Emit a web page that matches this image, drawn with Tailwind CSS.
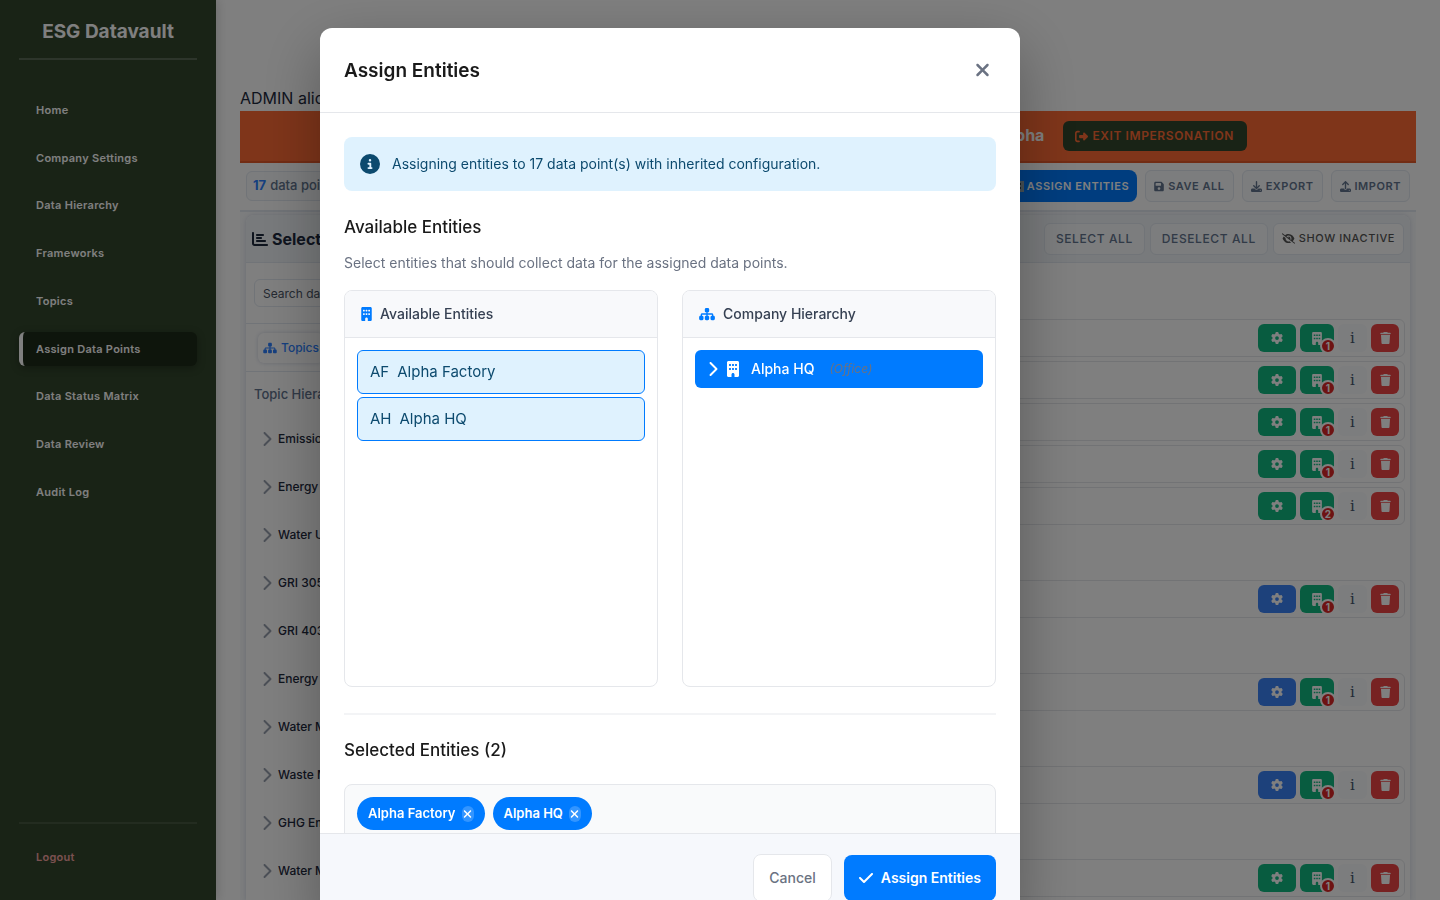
<!DOCTYPE html>
<html lang="en">
<head>
<meta charset="utf-8">
<meta name="viewport" content="width=device-width, initial-scale=1">
<title>ESG Datavault - Assign Data Points</title>
<script src="https://cdn.jsdelivr.net/npm/@tailwindcss/browser@4"></script>
</head>
<body class="h-screen overflow-hidden bg-white font-['Inter',sans-serif] text-slate-800">

<svg class="hidden" aria-hidden="true">
  <symbol id="xmark" viewBox="0 0 384 512"><path d="M342.6 150.6c12.5-12.5 12.5-32.8 0-45.3s-32.8-12.5-45.3 0L192 210.7 86.6 105.4c-12.5-12.5-32.8-12.5-45.3 0s-12.5 32.8 0 45.3L146.7 256 41.4 361.4c-12.5 12.5-12.5 32.8 0 45.3s32.8 12.5 45.3 0L192 301.3 297.4 406.6c12.5 12.5 32.8 12.5 45.3 0s12.5-32.8 0-45.3L237.3 256 342.6 150.6z"/></symbol>
  <symbol id="building" viewBox="0 0 384 512"><path d="M48 0C21.5 0 0 21.5 0 48V464c0 26.5 21.5 48 48 48h96V432c0-26.5 21.5-48 48-48s48 21.5 48 48v80h96c26.5 0 48-21.5 48-48V48c0-26.5-21.5-48-48-48H48zM64 240c0-8.8 7.2-16 16-16h32c8.8 0 16 7.2 16 16v32c0 8.8-7.2 16-16 16H80c-8.8 0-16-7.2-16-16V240zm112-16h32c8.8 0 16 7.2 16 16v32c0 8.8-7.2 16-16 16H176c-8.8 0-16-7.2-16-16V240c0-8.8 7.2-16 16-16zm80 16c0-8.8 7.2-16 16-16h32c8.8 0 16 7.2 16 16v32c0 8.8-7.2 16-16 16H272c-8.8 0-16-7.2-16-16V240zM80 96h32c8.8 0 16 7.2 16 16v32c0 8.8-7.2 16-16 16H80c-8.8 0-16-7.2-16-16V112c0-8.8 7.2-16 16-16zm80 16c0-8.8 7.2-16 16-16h32c8.8 0 16 7.2 16 16v32c0 8.8-7.2 16-16 16H176c-8.8 0-16-7.2-16-16V112zM272 96h32c8.8 0 16 7.2 16 16v32c0 8.8-7.2 16-16 16H272c-8.8 0-16-7.2-16-16V112c0-8.8 7.2-16 16-16z"/></symbol>
  <symbol id="chevron" viewBox="0 0 320 512"><path d="M310.6 233.4c12.5 12.5 12.5 32.8 0 45.3l-192 192c-12.5 12.5-32.8 12.5-45.3 0s-12.5-32.8 0-45.3L242.7 256 73.4 86.6c-12.5-12.5-12.5-32.8 0-45.3s32.8-12.5 45.3 0l192 192z"/></symbol>
  <symbol id="sitemap" viewBox="0 0 576 512"><path d="M208 80c0-26.5 21.5-48 48-48h64c26.5 0 48 21.5 48 48v64c0 26.5-21.5 48-48 48h-8v40H464c30.9 0 56 25.1 56 56v32h8c26.5 0 48 21.5 48 48v64c0 26.5-21.5 48-48 48H464c-26.5 0-48-21.5-48-48V368c0-26.5 21.5-48 48-48h8V288c0-4.4-3.6-8-8-8H312v40h8c26.5 0 48 21.5 48 48v64c0 26.5-21.5 48-48 48H256c-26.5 0-48-21.5-48-48V368c0-26.5 21.5-48 48-48h8V280H112c-4.4 0-8 3.6-8 8v32h8c26.5 0 48 21.5 48 48v64c0 26.5-21.5 48-48 48H48c-26.5 0-48-21.5-48-48V368c0-26.5 21.5-48 48-48h8V288c0-30.9 25.1-56 56-56H264V192h-8c-26.5 0-48-21.5-48-48V80z"/></symbol>
  <symbol id="info" viewBox="0 0 512 512"><path d="M256 512A256 256 0 1 0 256 0a256 256 0 1 0 0 512zM216 336h24V272H216c-13.3 0-24-10.7-24-24s10.7-24 24-24h48c13.3 0 24 10.7 24 24v88h8c13.3 0 24 10.7 24 24s-10.7 24-24 24H216c-13.3 0-24-10.7-24-24s10.7-24 24-24zm40-208a32 32 0 1 1 0 64 32 32 0 1 1 0-64z"/></symbol>
  <symbol id="check" viewBox="0 0 448 512"><path d="M438.6 105.4c12.5 12.5 12.5 32.8 0 45.3l-256 256c-12.5 12.5-32.8 12.5-45.3 0l-128-128c-12.5-12.5-12.5-32.8 0-45.3s32.8-12.5 45.3 0L160 338.7 393.4 105.4c12.5-12.5 32.8-12.5 45.3 0z"/></symbol>
  <symbol id="gear" viewBox="0 0 512 512"><path d="M495.9 166.6c3.2 8.7 .5 18.4-6.4 24.6l-43.3 39.4c1.1 8.3 1.7 16.8 1.7 25.4s-.6 17.1-1.7 25.4l43.3 39.4c6.9 6.2 9.6 15.9 6.4 24.6c-4.4 11.9-9.7 23.3-15.8 34.3l-4.7 8.1c-6.6 11-14 21.4-22.1 31.2c-5.9 7.2-15.7 9.6-24.5 6.8l-55.7-17.7c-13.4 10.3-28.2 18.9-44 25.4l-12.5 57.1c-2 9.1-9 16.3-18.2 17.8c-13.8 2.3-28 3.5-42.5 3.5s-28.7-1.2-42.5-3.5c-9.2-1.5-16.2-8.7-18.2-17.8l-12.5-57.1c-15.8-6.5-30.6-15.1-44-25.4L83.1 425.9c-8.8 2.8-18.6 .3-24.5-6.8c-8.1-9.8-15.5-20.2-22.1-31.2l-4.7-8.1c-6.1-11-11.4-22.4-15.8-34.3c-3.2-8.7-.5-18.4 6.4-24.6l43.3-39.4C64.6 273.1 64 264.6 64 256s.6-17.1 1.7-25.4L22.4 191.2c-6.9-6.2-9.6-15.9-6.4-24.6c4.4-11.9 9.7-23.3 15.8-34.3l4.7-8.1c6.6-11 14-21.4 22.1-31.2c5.9-7.2 15.7-9.6 24.5-6.8l55.7 17.7c13.4-10.3 28.2-18.9 44-25.4l12.5-57.1c2-9.1 9-16.3 18.2-17.8C227.3 1.2 241.5 0 256 0s28.7 1.2 42.5 3.5c9.2 1.5 16.2 8.7 18.2 17.8l12.5 57.1c15.8 6.5 30.6 15.1 44 25.4l55.7-17.7c8.8-2.8 18.6-.3 24.5 6.8c8.1 9.8 15.5 20.2 22.1 31.2l4.7 8.1c6.1 11 11.4 22.4 15.8 34.3zM256 336a80 80 0 1 0 0-160 80 80 0 1 0 0 160z"/></symbol>
  <symbol id="trash" viewBox="0 0 448 512"><path d="M135.2 17.7L128 32H32C14.3 32 0 46.3 0 64S14.3 96 32 96H416c17.7 0 32-14.3 32-32s-14.3-32-32-32H320l-7.2-14.3C307.4 6.8 296.3 0 284.2 0H163.8c-12.1 0-23.2 6.8-28.6 17.7zM416 128H32L53.2 467c1.6 25.3 22.6 45 47.9 45H346.9c25.3 0 46.3-19.7 47.9-45L416 128z"/></symbol>
  <symbol id="exit" viewBox="0 0 512 512"><path d="M377.9 105.9L500.7 228.7c7.2 7.2 11.3 17.1 11.3 27.3s-4.1 20.1-11.3 27.3L377.9 406.1c-6.4 6.4-15 9.9-24 9.9c-18.7 0-33.9-15.2-33.9-33.9l0-62.1-128 0c-17.7 0-32-14.3-32-32l0-64c0-17.7 14.3-32 32-32l128 0 0-62.1c0-18.7 15.2-33.9 33.9-33.9c9 0 17.6 3.6 24 9.9zM160 96L96 96c-17.7 0-32 14.3-32 32l0 256c0 17.7 14.3 32 32 32l64 0c17.7 0 32 14.3 32 32s-14.3 32-32 32l-64 0c-53 0-96-43-96-96L0 128C0 75 43 32 96 32l64 0c17.7 0 32 14.3 32 32s-14.3 32-32 32z"/></symbol>
  <symbol id="save" viewBox="0 0 448 512"><path d="M64 32C28.7 32 0 60.7 0 96V416c0 35.3 28.7 64 64 64H384c35.3 0 64-28.7 64-64V173.3c0-17-6.7-33.3-18.7-45.3L352 50.7C340 38.7 323.7 32 306.7 32H64zm0 96c0-17.7 14.3-32 32-32H288c17.7 0 32 14.3 32 32v64c0 17.7-14.3 32-32 32H96c-17.7 0-32-14.3-32-32V128zM224 288a64 64 0 1 1 0 128 64 64 0 1 1 0-128z"/></symbol>
  <symbol id="download" viewBox="0 0 512 512"><path d="M288 32c0-17.7-14.3-32-32-32s-32 14.3-32 32V274.7l-73.4-73.4c-12.5-12.5-32.8-12.5-45.3 0s-12.5 32.8 0 45.3l128 128c12.5 12.5 32.8 12.5 45.3 0l128-128c12.5-12.5 12.5-32.8 0-45.3s-32.8-12.5-45.3 0L288 274.7V32zM64 352c-35.3 0-64 28.7-64 64v32c0 35.3 28.7 64 64 64H448c35.3 0 64-28.7 64-64V416c0-35.3-28.7-64-64-64H346.5l-45.3 45.3c-25 25-65.5 25-90.5 0L165.5 352H64zm368 56a24 24 0 1 1 0 48 24 24 0 1 1 0-48z"/></symbol>
  <symbol id="upload" viewBox="0 0 512 512"><path d="M288 109.3V352c0 17.7-14.3 32-32 32s-32-14.3-32-32V109.3l-73.4 73.4c-12.5 12.5-32.8 12.5-45.3 0s-12.5-32.8 0-45.3l128-128c12.5-12.5 32.8-12.5 45.3 0l128 128c12.5 12.5 12.5 32.8 0 45.3s-32.8 12.5-45.3 0L288 109.3zM64 352H192c0 35.3 28.7 64 64 64s64-28.7 64-64H448c35.3 0 64 28.7 64 64v32c0 35.3-28.7 64-64 64H64c-35.3 0-64-28.7-64-64V416c0-35.3 28.7-64 64-64zM432 456a24 24 0 1 0 0-48 24 24 0 1 0 0 48z"/></symbol>
  <symbol id="eye-slash" viewBox="0 0 640 512"><path d="M38.8 5.1C28.4-3.1 13.3-1.2 5.1 9.2S-1.2 34.7 9.2 42.9l592 464c10.4 8.2 25.5 6.3 33.7-4.1s6.3-25.5-4.1-33.7L525.6 386.7c39.6-40.6 66.4-86.1 79.9-118.4c3.3-7.9 3.3-16.7 0-24.6c-14.9-35.7-46.2-87.7-93-131.1C465.5 68.8 400.8 32 320 32c-68.2 0-125 26.3-169.3 60.8L38.8 5.1zM223.1 149.5C248.6 126.2 282.7 112 320 112c79.5 0 144 64.5 144 144c0 24.9-6.3 48.3-17.4 68.7L408 294.5c8.4-19.3 10.6-41.4 4.8-63.3c-11.1-41.5-47.8-69.4-88.6-71.1c-5.8-.2-9.2 6.1-7.4 11.7c2.1 6.4 3.3 13.2 3.3 20.3c0 10.2-2.4 19.8-6.6 28.3l-90.3-70.8zM373 389.9c-16.4 6.5-34.3 10.1-53 10.1c-79.5 0-144-64.5-144-144c0-6.9 .5-13.6 1.4-20.2L83.1 161.5C60.3 191.2 44 220.8 34.5 243.7c-3.3 7.9-3.3 16.7 0 24.6c14.9 35.7 46.2 87.7 93 131.1C174.5 443.2 239.2 480 320 480c47.8 0 89.9-12.9 126.2-32.5L373 389.9z"/></symbol>
  <symbol id="chart" viewBox="0 0 512 512"><path d="M32 32c17.7 0 32 14.3 32 32V400c0 8.8 7.2 16 16 16H480c17.7 0 32 14.3 32 32s-14.3 32-32 32H80c-44.2 0-80-35.8-80-80V64C0 46.3 14.3 32 32 32zm96 96c0-17.7 14.3-32 32-32l192 0c17.7 0 32 14.3 32 32s-14.3 32-32 32H160c-17.7 0-32-14.3-32-32zm32 64H288c17.7 0 32 14.3 32 32s-14.3 32-32 32H160c-17.7 0-32-14.3-32-32s14.3-32 32-32zm0 96H416c17.7 0 32 14.3 32 32s-14.3 32-32 32H160c-17.7 0-32-14.3-32-32s14.3-32 32-32z"/></symbol>
</svg>

<div class="flex h-full">
  <!-- Sidebar -->
  <aside class="z-10 flex w-[216px] shrink-0 flex-col bg-[#32462c] px-[19px] shadow-[2px_0_10px_rgba(0,0,0,0.15)]">
    <div class="flex h-[60px] items-center justify-center border-b-2 border-white/20 pt-1.5 text-[19px] leading-6 font-bold text-white">ESG Datavault</div>
    <nav class="mt-[33px] flex h-[416px] flex-col justify-between text-[11px] font-semibold tracking-wide text-white">
      <a href="#" class="flex h-[34px] items-center px-[17px]">Home</a>
      <a href="#" class="flex h-[34px] items-center px-[17px]">Company Settings</a>
      <a href="#" class="flex h-[34px] items-center px-[17px]">Data Hierarchy</a>
      <a href="#" class="flex h-[34px] items-center px-[17px]">Frameworks</a>
      <a href="#" class="flex h-[34px] items-center px-[17px]">Topics</a>
      <a href="#" class="flex h-[34px] items-center rounded-md border-l-4 border-white bg-[#1d2a18] pl-[13px] shadow-[0_2px_8px_rgba(0,0,0,0.3)]">Assign Data Points</a>
      <a href="#" class="flex h-[34px] items-center px-[17px]">Data Status Matrix</a>
      <a href="#" class="flex h-[34px] items-center px-[17px]">Data Review</a>
      <a href="#" class="flex h-[34px] items-center px-[17px]">Audit Log</a>
    </nav>
    <div class="mt-auto h-[78px] border-t-2 border-white/10 pt-4 text-[11px] font-semibold tracking-wide">
      <a href="#" class="flex h-[34px] items-center px-[17px] text-[#f5a3a3]">Logout</a>
    </div>
  </aside>

  <!-- Page -->
  <main class="flex min-w-0 flex-1 flex-col px-6 pt-[86px]">
    <p class="h-[25px] text-base">ADMIN alice</p>

    <div class="flex h-[52px] shrink-0 items-center justify-end gap-[19px] border-b-2 border-[#e55a2b] bg-[#ff6b35] pr-[169px] text-white">
      <strong class="pb-[3px] text-base leading-6 font-bold">Alpha</strong>
      <button class="flex h-[30px] items-center gap-1 rounded-md bg-[#32462c] px-3 pr-[13px] text-xs font-semibold tracking-wider text-[#ff6b35]"><svg class="size-[13px] fill-current"><use href="#exit"/></svg>EXIT IMPERSONATION</button>
    </div>

    <div class="flex h-[49px] shrink-0 items-center justify-between border-b-2 border-slate-200 px-1.5 pb-px text-[11px] font-medium text-slate-500">
      <div class="flex h-[30px] items-center gap-1 rounded-md border border-slate-200 bg-slate-50 px-1.5 text-[13px]"><b class="font-bold text-blue-500">17</b>data points</div>
      <div class="flex gap-2">
        <button class="flex h-8 items-center gap-[3px] rounded-lg bg-[#007bff] px-2 font-semibold tracking-wider text-white"><svg class="size-3" viewBox="0 0 12 12"><path fill="#90a4ae" d="M1 1h11v11H1z"/><path fill="#37474f" d="M3 3h2v2H3zM7 3h2v2H7zM3 7h2v2H3zM7 7h2v2H7z"/></svg>ASSIGN ENTITIES</button>
        <button class="flex h-8 items-center gap-1 rounded-md border border-slate-200 bg-slate-50 px-2 font-semibold tracking-wider"><svg class="h-[11px] w-[10px] fill-current"><use href="#save"/></svg>SAVE ALL</button>
        <button class="flex h-8 items-center gap-1 rounded-md border border-slate-200 bg-slate-50 px-2 font-semibold tracking-wider"><svg class="size-[11px] fill-current"><use href="#download"/></svg>EXPORT</button>
        <button class="flex h-8 items-center gap-1 rounded-md border border-slate-200 bg-slate-50 px-2 font-semibold tracking-wider"><svg class="size-[11px] fill-current"><use href="#upload"/></svg>IMPORT</button>
      </div>
    </div>

    <div class="flex min-h-0 flex-1 gap-2 bg-slate-50 px-1.5 pt-[3px]">
      <!-- Topic tree -->
      <section class="w-[400px] shrink-0 rounded-t-lg bg-white shadow-[0_0_4px_rgba(100,116,160,0.25)]">
        <h2 class="flex h-12 items-center gap-1 rounded-t-lg border-b border-slate-200 bg-slate-100 px-1.5 text-base font-bold"><svg class="size-4 fill-current"><use href="#chart"/></svg>Select</h2>
        <div class="h-[61px] border-b border-slate-200 px-2 pt-4">
          <input type="text" aria-label="Search data points" placeholder="Search data" class="h-[28px] w-full rounded-md border border-slate-200 bg-white px-2 text-xs placeholder:text-gray-600">
        </div>
        <div class="flex h-12 items-center border-b border-slate-200 px-3">
          <button class="flex h-[30px] items-center gap-1 rounded-md bg-white px-[5px] text-xs font-medium text-blue-500 shadow-[0_0_4px_rgba(100,116,160,0.3)]"><svg class="h-3 w-[14px] fill-current"><use href="#sitemap"/></svg>Topics</button>
        </div>
        <h3 class="flex h-[43px] items-center px-2 pt-0.5 text-[13px] font-medium text-slate-500">Topic Hierarchy</h3>
        <ul id="topics" class="text-xs font-medium"></ul>
      </section>

      <!-- Selected data points -->
      <section class="min-w-0 flex-1 rounded-t-lg bg-white shadow-[0_0_4px_rgba(100,116,160,0.25)]">
        <div class="flex h-12 items-center justify-end gap-[5px] rounded-t-lg border-b border-slate-200 bg-slate-100 px-1.5 font-medium">
          <button class="h-8 rounded-md border border-slate-200 bg-slate-50 px-[11px] text-xs tracking-wider text-slate-500">SELECT ALL</button>
          <button class="h-8 rounded-md border border-slate-200 bg-slate-50 px-[11px] text-xs tracking-wider text-slate-500">DESELECT ALL</button>
          <button class="flex h-8 items-center gap-1 rounded-md border border-slate-200 bg-white px-2 text-[11px] tracking-wider text-[#555555]"><svg class="h-[11px] w-[13px] fill-current"><use href="#eye-slash"/></svg>SHOW INACTIVE</button>
        </div>
        <div id="points" class="flex flex-col gap-[55px] px-[5px] pt-14"></div>
      </section>
    </div>
  </main>
</div>

<script>
  const topics = ['Emissions', 'Energy Use', 'Water Usage', 'GRI 305', 'GRI 403', 'Energy Use', 'Water Mix', 'Waste Mix', 'GHG Emissions', 'Water Mix'];
  document.getElementById('topics').innerHTML = topics.map(t =>
    `<li class="flex h-12 items-center gap-1.5 px-[15px]"><svg class="h-4 w-[11px] fill-gray-400"><use href="#chevron"/></svg>${t}</li>`).join('');

  // Each group lists its rows as [configured, entity count]
  const groups = [[[1, 1], [1, 1], [1, 1], [1, 1], [1, 2]], [[0, 1]], [[0, 1]], [[0, 1]], [[1, 1]]];
  const gearClass = c => c ? 'bg-[#10b981]' : 'bg-[#3b82f6]';
  document.getElementById('points').innerHTML = groups.map(g => `<div class="flex flex-col gap-1">${g.map(([c, n]) => `
    <div class="flex h-[38px] items-center justify-end gap-1 rounded-md border border-gray-200 px-[5px] text-white">
      <button aria-label="Configure" class="flex h-7 w-[38px] items-center justify-center rounded-md ${gearClass(c)}"><svg class="size-3 fill-current"><use href="#gear"/></svg></button>
      <button aria-label="Entities" class="relative flex h-7 w-[34px] items-center justify-center rounded-md bg-[#10b981]"><svg class="h-[13px] w-[10px] fill-current"><use href="#building"/></svg><span class="absolute -right-0.5 -bottom-0.5 flex size-4 items-center justify-center rounded-full border-2 border-white bg-[#dc2626] text-[10px] leading-none font-bold">${n}</span></button>
      <button aria-label="Information" class="flex h-7 w-[29px] items-center justify-center rounded-md bg-slate-50 font-['DejaVu_Serif',serif] text-[15px] text-slate-600">i</button>
      <button aria-label="Remove" class="flex h-7 w-[28px] items-center justify-center rounded-md bg-[#ef4444]"><svg class="h-3 w-[11px] fill-current"><use href="#trash"/></svg></button>
    </div>`).join('')}</div>`).join('');
</script>

<!-- Assign entities dialog -->
<div class="fixed inset-0 z-20 flex items-start justify-center overflow-hidden bg-black/50 pt-7 pr-[100px]">
  <div role="dialog" aria-labelledby="dialog-title" class="w-full max-w-[700px] overflow-hidden rounded-xl bg-white shadow-[0_20px_60px_rgba(0,0,0,0.3)]">
    <header class="flex h-[85px] items-center justify-between border-b border-gray-200 px-6">
      <h2 id="dialog-title" class="pt-[3px] text-[19px] font-semibold text-[#1a1a1a]">Assign Entities</h2>
      <button aria-label="Close" class="flex size-7 items-center justify-center text-gray-500"><svg class="h-5 w-[15px] fill-current"><use href="#xmark"/></svg></button>
    </header>

    <div class="max-h-[80vh] overflow-hidden p-6">
      <div class="flex h-[54px] items-center gap-3 rounded-lg bg-sky-100 px-4 text-sm text-[#0c4a6e]"><svg class="size-5 fill-current"><use href="#info"/></svg>Assigning entities to 17 data point(s) with inherited configuration.</div>

      <h3 class="mt-[22px] text-[17px] leading-7 font-medium text-[#1a1a1a]">Available Entities</h3>
      <p class="mt-3 text-sm text-gray-500">Select entities that should collect data for the assigned data points.</p>

      <div class="mt-[17px] grid grid-cols-2 gap-6">
        <section class="h-[397px] overflow-hidden rounded-lg border border-gray-200">
          <h4 class="flex h-[47px] items-center gap-2 border-b border-gray-200 bg-[#f8f9fb] px-4 text-sm font-medium text-gray-700"><svg class="h-[14px] w-[11px] fill-[#007bff]"><use href="#building"/></svg>Available Entities</h4>
          <div class="flex flex-col gap-[3px] p-3 text-[15px] text-[#0c4a6e]">
            <button class="flex h-11 items-center gap-2 rounded-md border border-[#007bff] bg-sky-100 px-3"><span>AF</span><span>Alpha Factory</span></button>
            <button class="flex h-11 items-center gap-2 rounded-md border border-[#007bff] bg-sky-100 px-3"><span>AH</span><span>Alpha HQ</span></button>
          </div>
        </section>
        <section class="h-[397px] overflow-hidden rounded-lg border border-gray-200">
          <h4 class="flex h-[47px] items-center gap-2 border-b border-gray-200 bg-[#f8f9fb] px-4 text-sm font-medium text-gray-700"><svg class="h-[14px] w-4 fill-[#007bff]"><use href="#sitemap"/></svg>Company Hierarchy</h4>
          <div class="p-3">
            <button class="flex h-[38px] w-full items-center rounded-md bg-[#007bff] px-3 text-sm font-medium text-white"><svg class="h-4 w-[11px] fill-current"><use href="#chevron"/></svg><svg class="ml-[9px] h-4 w-3 fill-current"><use href="#building"/></svg><span class="ml-3">Alpha HQ</span><em class="ml-[15px] text-xs font-normal text-gray-500">(Office)</em></button>
          </div>
        </section>
      </div>

      <section class="mt-[26px] border-t-2 border-gray-100 pt-[21px]">
        <h3 class="text-[17px] leading-7 font-medium text-[#1a1a1a]">Selected Entities (2)</h3>
        <div class="mt-5 flex h-20 items-start gap-2 rounded-lg border border-gray-200 bg-gray-50 p-3 text-[13px] font-semibold text-white">
          <span class="flex h-[33px] items-center gap-1.5 rounded-full bg-[#007bff] px-[11px]">Alpha Factory<button aria-label="Remove Alpha Factory" class="flex h-4 w-3 items-center justify-center rounded-full bg-white/20"><svg class="h-3 w-[9px] fill-current"><use href="#xmark"/></svg></button></span>
          <span class="flex h-[33px] items-center gap-1.5 rounded-full bg-[#007bff] px-[11px]">Alpha HQ<button aria-label="Remove Alpha HQ" class="flex h-4 w-3 items-center justify-center rounded-full bg-white/20"><svg class="h-3 w-[9px] fill-current"><use href="#xmark"/></svg></button></span>
        </div>
      </section>
    </div>

    <footer class="flex items-center justify-end gap-3 border-t border-gray-200 bg-[#f6f8fc] px-6 py-5 text-sm">
      <button class="h-12 rounded-lg border border-gray-200 bg-white px-[15px] font-medium text-gray-500">Cancel</button>
      <button class="flex h-[46px] items-center gap-2 rounded-lg bg-[#007bff] px-[15px] font-semibold text-white"><svg class="h-4 w-[14px] fill-current"><use href="#check"/></svg>Assign Entities</button>
    </footer>
  </div>
</div>
</body>
</html>
